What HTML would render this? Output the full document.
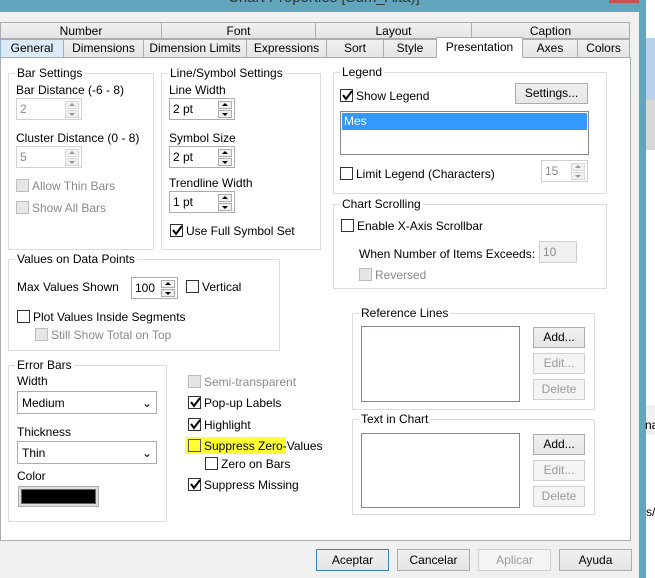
<!DOCTYPE html>
<html><head><meta charset="utf-8"><style>
*{box-sizing:border-box;margin:0;padding:0}
body{width:655px;height:578px;overflow:hidden;position:relative;background:#f0f0f0;font-family:"Liberation Sans",sans-serif;font-size:12px;color:#000}
.a{position:absolute}
.t{position:absolute;white-space:nowrap;line-height:14px}
.g{color:#8a8a8a}
.tab{position:absolute;border:1px solid #acacac;background:linear-gradient(#f0f0f0,#e5e5e5);text-align:center;line-height:16px;font-size:12px}
.grp{position:absolute;border:1px solid #dcdcdc}
.gl{position:absolute;top:-8px;left:6px;background:#fff;padding:0 2px;line-height:14px;white-space:nowrap}
.cb{position:absolute;width:13px;height:13px;border:1px solid #333;background:#fff}
.cb.d{border-color:#bcbcbc;background:#e6e6e6}
.cb svg{position:absolute;left:1px;top:0}
.spin{position:absolute;border:1px solid #acacac;background:#fff;height:22px}
.spin .v{position:absolute;left:3px;top:3px}
.sb{position:absolute;right:2px;width:14px;height:8px;border:1px solid #acacac;background:#f0f0f0}
.sb::after{content:"";position:absolute;left:3px;width:0;height:0;border-left:3px solid transparent;border-right:3px solid transparent}
.sb.u::after{top:1px;border-bottom:3px solid #000}
.sb.dn::after{top:2px;border-top:3px solid #000}
.spin.x .sb{border-color:#d8d8d8}
.spin.x .sb.u::after{border-bottom-color:#999}
.spin.x .sb.dn::after{border-top-color:#999}
.btn{position:absolute;border:1px solid #acacac;background:linear-gradient(#f0f0f0,#e5e5e5);text-align:center;line-height:18px}
.btn.d{color:#9a9a9a;border-color:#d0d0d0;background:#f4f4f4}
.sel{position:absolute;border:1px solid #acacac;background:#fff;height:23px}
</style></head><body>
<div class="a" style="left:0;top:0;width:655px;height:12px;background:#62a6bd"></div>
<div class="t" style="left:228px;top:-9px;font-size:15px;color:#333">Chart Properties [Sum_Alta)]</div>
<div class="a" style="left:609px;top:0;width:31px;height:3px;background:#c75050"></div>
<div class="a" style="left:639px;top:0;width:7px;height:578px;background:#62a6bd"></div>
<div class="a" style="left:646px;top:0;width:9px;height:578px;background:#fff"></div>
<div class="a" style="left:646px;top:38px;width:9px;height:62px;background:#b9d1ea"></div>
<div class="a" style="left:646px;top:100px;width:9px;height:50px;background:#d8d8d8"></div>
<div class="a" style="left:646px;top:405px;width:9px;height:30px;background:#f0f0f0"></div>
<div class="t" style="left:645px;top:418px">na</div>
<div class="t" style="left:646px;top:505px">s/</div>
<div class="a" style="left:0;top:12px;width:639px;height:566px;background:#f0f0f0"></div>

<div class="tab" style="left:0;top:22px;width:162px;height:17px">Number</div>
<div class="tab" style="left:161px;top:22px;width:155px;height:17px">Font</div>
<div class="tab" style="left:315px;top:22px;width:157px;height:17px">Layout</div>
<div class="tab" style="left:471px;top:22px;width:159px;height:17px">Caption</div>
<div class="tab" style="left:0;top:39px;width:64px;height:19px;background:#dceaf7;border-color:#8cb4da">General</div>
<div class="tab" style="left:63px;top:39px;width:81px;height:19px">Dimensions</div>
<div class="tab" style="left:143px;top:39px;width:104px;height:19px">Dimension Limits</div>
<div class="tab" style="left:246px;top:39px;width:81px;height:19px">Expressions</div>
<div class="tab" style="left:326px;top:39px;width:58px;height:19px">Sort</div>
<div class="tab" style="left:383px;top:39px;width:54px;height:19px">Style</div>
<div class="tab" style="left:522px;top:39px;width:56px;height:19px">Axes</div>
<div class="tab" style="left:577px;top:39px;width:53px;height:19px">Colors</div>

<div class="a" style="left:0;top:57px;width:631px;height:484px;background:#fff;border:1px solid #acacac"></div>
<div class="tab" style="left:436px;top:37px;width:87px;height:21px;background:#fff;border-bottom:none;line-height:18px">Presentation</div>

<!-- Bar settings -->
<div class="grp" style="left:8px;top:73px;width:146px;height:177px"><div class="gl">Bar Settings</div></div>
<div class="t" style="left:16px;top:83px">Bar Distance (-6 - 8)</div>
<div class="spin x" style="left:16px;top:98px;width:66px;border-color:#d0d0d0"><span class="v g">2</span><div class="sb u" style="top:2px"></div><div class="sb dn" style="top:11px"></div></div>
<div class="t" style="left:16px;top:131px">Cluster Distance (0 - 8)</div>
<div class="spin x" style="left:16px;top:146px;width:66px;border-color:#d0d0d0"><span class="v g">5</span><div class="sb u" style="top:2px"></div><div class="sb dn" style="top:11px"></div></div>
<div class="cb d" style="left:16px;top:179px"></div><div class="t g" style="left:32px;top:179px">Allow Thin Bars</div>
<div class="cb d" style="left:16px;top:201px"></div><div class="t g" style="left:32px;top:201px">Show All Bars</div>

<!-- Line/Symbol -->
<div class="grp" style="left:161px;top:73px;width:160px;height:177px"><div class="gl">Line/Symbol Settings</div></div>
<div class="t" style="left:169px;top:83px">Line Width</div>
<div class="spin" style="left:169px;top:98px;width:66px"><span class="v">2 pt</span><div class="sb u" style="top:2px"></div><div class="sb dn" style="top:11px"></div></div>
<div class="t" style="left:169px;top:131px">Symbol Size</div>
<div class="spin" style="left:169px;top:146px;width:66px"><span class="v">2 pt</span><div class="sb u" style="top:2px"></div><div class="sb dn" style="top:11px"></div></div>
<div class="t" style="left:169px;top:176px">Trendline Width</div>
<div class="spin" style="left:169px;top:191px;width:66px"><span class="v">1 pt</span><div class="sb u" style="top:2px"></div><div class="sb dn" style="top:11px"></div></div>
<div class="cb" style="left:170px;top:224px"><svg width="11" height="11"><path d="M1 5 L4 9 L10 1" stroke="#000" stroke-width="2" fill="none"/></svg></div><div class="t" style="left:186px;top:224px">Use Full Symbol Set</div>

<!-- Values -->
<div class="grp" style="left:8px;top:259px;width:272px;height:92px"><div class="gl">Values on Data Points</div></div>
<div class="t" style="left:17px;top:280px">Max Values Shown</div>
<div class="spin" style="left:131px;top:277px;width:47px"><span class="v">100</span><div class="sb u" style="top:2px"></div><div class="sb dn" style="top:11px"></div></div>
<div class="cb" style="left:186px;top:280px"></div><div class="t" style="left:202px;top:280px">Vertical</div>
<div class="cb" style="left:17px;top:310px"></div><div class="t" style="left:33px;top:310px">Plot Values Inside Segments</div>
<div class="cb d" style="left:35px;top:328px"></div><div class="t g" style="left:51px;top:328px">Still Show Total on Top</div>

<!-- Error bars -->
<div class="grp" style="left:8px;top:365px;width:159px;height:157px"><div class="gl">Error Bars</div></div>
<div class="t" style="left:17px;top:374px">Width</div>
<div class="sel" style="left:17px;top:391px;width:140px"><span class="t" style="left:4px;top:4px">Medium</span><span class="t" style="right:4px;top:4px">&#8964;</span></div>
<div class="t" style="left:17px;top:425px">Thickness</div>
<div class="sel" style="left:17px;top:441px;width:140px"><span class="t" style="left:4px;top:4px">Thin</span><span class="t" style="right:4px;top:4px">&#8964;</span></div>
<div class="t" style="left:17px;top:469px">Color</div>
<div class="a" style="left:18px;top:486px;width:81px;height:21px;border:1px solid #acacac;background:#ddd;padding:2px"><div style="width:100%;height:100%;background:#000;border:1px solid #666"></div></div>

<!-- middle checkboxes -->
<div class="cb d" style="left:188px;top:375px"></div><div class="t g" style="left:204px;top:375px">Semi-transparent</div>
<div class="cb" style="left:188px;top:396px"><svg width="11" height="11"><path d="M1 5 L4 9 L10 1" stroke="#000" stroke-width="2" fill="none"/></svg></div><div class="t" style="left:204px;top:396px">Pop-up Labels</div>
<div class="cb" style="left:188px;top:418px"><svg width="11" height="11"><path d="M1 5 L4 9 L10 1" stroke="#000" stroke-width="2" fill="none"/></svg></div><div class="t" style="left:204px;top:418px">Highlight</div>
<div class="a" style="left:185px;top:437px;width:101px;height:17px;background:#ffff33"></div>
<div class="cb" style="left:188px;top:439px;background:#ffff33;border-color:#555"></div><div class="t" style="left:204px;top:439px">Suppress Zero-Values</div>
<div class="cb" style="left:205px;top:457px"></div><div class="t" style="left:221px;top:457px">Zero on Bars</div>
<div class="cb" style="left:188px;top:478px"><svg width="11" height="11"><path d="M1 5 L4 9 L10 1" stroke="#000" stroke-width="2" fill="none"/></svg></div><div class="t" style="left:204px;top:478px">Suppress Missing</div>

<!-- Legend -->
<div class="grp" style="left:333px;top:72px;width:274px;height:122px"><div class="gl">Legend</div></div>
<div class="cb" style="left:340px;top:89px"><svg width="11" height="11"><path d="M1 5 L4 9 L10 1" stroke="#000" stroke-width="2" fill="none"/></svg></div><div class="t" style="left:356px;top:89px">Show Legend</div>
<div class="btn" style="left:515px;top:83px;width:73px;height:21px">Settings...</div>
<div class="a" style="left:340px;top:111px;width:249px;height:44px;border:1px solid #828790;background:#fff"><div style="margin:1px;height:17px;background:#3399ff;color:#fff;padding-left:2px;line-height:17px">Mes</div></div>
<div class="cb" style="left:340px;top:167px"></div><div class="t" style="left:356px;top:167px">Limit Legend (Characters)</div>
<div class="spin x" style="left:541px;top:160px;width:47px;border-color:#d0d0d0"><span class="v g">15</span><div class="sb u" style="top:2px"></div><div class="sb dn" style="top:11px"></div></div>

<!-- Chart scrolling -->
<div class="grp" style="left:333px;top:204px;width:274px;height:85px"><div class="gl">Chart Scrolling</div></div>
<div class="cb" style="left:341px;top:219px"></div><div class="t" style="left:357px;top:219px">Enable X-Axis Scrollbar</div>
<div class="t" style="left:359px;top:247px">When Number of Items Exceeds:</div>
<div class="a" style="left:539px;top:241px;width:38px;height:22px;border:1px solid #d0d0d0;background:#f0f0f0"><span class="t g" style="left:3px;top:3px">10</span></div>
<div class="cb d" style="left:359px;top:268px"></div><div class="t g" style="left:375px;top:268px">Reversed</div>

<!-- Reference lines -->
<div class="grp" style="left:352px;top:313px;width:243px;height:97px"><div class="gl">Reference Lines</div></div>
<div class="a" style="left:361px;top:326px;width:159px;height:76px;border:1px solid #828790;background:#fff"></div>
<div class="btn" style="left:533px;top:327px;width:52px;height:21px">Add...</div>
<div class="btn d" style="left:533px;top:353px;width:52px;height:21px">Edit...</div>
<div class="btn d" style="left:533px;top:379px;width:52px;height:21px">Delete</div>

<div class="grp" style="left:352px;top:419px;width:243px;height:96px"><div class="gl">Text in Chart</div></div>
<div class="a" style="left:361px;top:433px;width:159px;height:75px;border:1px solid #828790;background:#fff"></div>
<div class="btn" style="left:533px;top:434px;width:52px;height:21px">Add...</div>
<div class="btn d" style="left:533px;top:460px;width:52px;height:21px">Edit...</div>
<div class="btn d" style="left:533px;top:486px;width:52px;height:21px">Delete</div>

<!-- bottom buttons -->
<div class="btn" style="left:316px;top:549px;width:73px;height:22px;border-color:#3c7fb1;line-height:20px">Aceptar</div>
<div class="btn" style="left:397px;top:549px;width:73px;height:22px;line-height:20px">Cancelar</div>
<div class="btn d" style="left:478px;top:549px;width:73px;height:22px;line-height:20px">Aplicar</div>
<div class="btn" style="left:559px;top:549px;width:73px;height:22px;line-height:20px">Ayuda</div>
</body></html>
